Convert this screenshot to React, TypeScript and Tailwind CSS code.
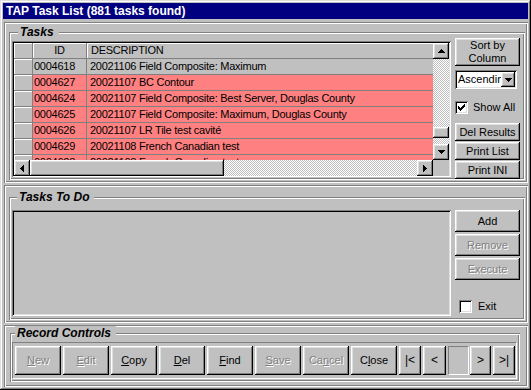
import React from "react";

const RAISED =
  "shadow-[inset_-1px_-1px_#000,inset_1px_1px_#fff,inset_-2px_-2px_#808080,inset_2px_2px_#dfdfdf]";
const SUNKEN =
  "shadow-[inset_1px_1px_#808080,inset_-1px_-1px_#fff,inset_2px_2px_#000,inset_-2px_-2px_#dfdfdf]";
const ETCHED =
  "shadow-[inset_1px_1px_#808080,inset_-1px_-1px_#fff,inset_2px_2px_#fff,inset_-2px_-2px_#808080]";
const CHECKER =
  "bg-[image:repeating-conic-gradient(#fff_0_25%,#c0c0c0_0_50%)] bg-[length:2px_2px]";

function Tri({ dir }: { dir: "up" | "down" | "left" | "right" }) {
  if (dir === "up")
    return (
      <svg width="7" height="4" shapeRendering="crispEdges">
        <path d="M3 0h1v1H3z M2 1h3v1H2z M1 2h5v1H1z M0 3h7v1H0z" fill="#000" />
      </svg>
    );
  if (dir === "down")
    return (
      <svg width="7" height="4" shapeRendering="crispEdges">
        <path d="M0 0h7v1H0z M1 1h5v1H1z M2 2h3v1H2z M3 3h1v1H3z" fill="#000" />
      </svg>
    );
  if (dir === "left")
    return (
      <svg width="4" height="7" shapeRendering="crispEdges">
        <path d="M3 0h1v7H3z M2 1h1v5H2z M1 2h1v3H1z M0 3h1v1H0z" fill="#000" />
      </svg>
    );
  return (
    <svg width="4" height="7" shapeRendering="crispEdges">
      <path d="M0 0h1v7H0z M1 1h1v5H1z M2 2h1v3H2z M3 3h1v1H3z" fill="#000" />
    </svg>
  );
}

function Btn({
  children,
  className = "",
  disabled = false,
}: {
  children: React.ReactNode;
  className?: string;
  disabled?: boolean;
}) {
  return (
    <div
      className={`flex items-center justify-center shrink-0 bg-[#c0c0c0] text-[11px] leading-[13px] ${RAISED} ${
        disabled ? "text-[#808080] [text-shadow:1px_1px_0_#fff]" : "text-black"
      } ${className}`}
    >
      {children}
    </div>
  );
}

function Group({
  label,
  labelLeft,
  className = "",
  children,
}: {
  label: string;
  labelLeft: string;
  className?: string;
  children: React.ReactNode;
}) {
  return (
    <div className={`relative ${ETCHED} ${className}`}>
      <span
        className={`absolute top-[-7px] ${labelLeft} h-[14px] pl-[2px] pr-[5px] bg-[#c0c0c0] font-bold italic text-[12px] leading-[14px] text-black`}
      >
        {label}
      </span>
      {children}
    </div>
  );
}

function CheckBox({ checked }: { checked: boolean }) {
  return (
    <div className={`w-[13px] h-[13px] shrink-0 bg-white flex items-center justify-center ${SUNKEN}`}>
      {checked && (
        <svg width="7" height="7" shapeRendering="crispEdges">
          <path
            d="M6 0h1v3H6z M5 1h1v3H5z M4 2h1v3H4z M3 3h1v3H3z M2 4h1v3H2z M1 3h1v3H1z M0 2h1v3H0z"
            fill="#000"
          />
        </svg>
      )}
    </div>
  );
}

const rows = [
  { id: "0004618", d: "20021106 Field Composite: Maximum", hl: false },
  { id: "0004627", d: "20021107 BC Contour", hl: true },
  { id: "0004624", d: "20021107 Field Composite: Best Server, Douglas County", hl: true },
  { id: "0004625", d: "20021107 Field Composite: Maximum, Douglas County", hl: true },
  { id: "0004626", d: "20021107 LR Tile test cavité", hl: true },
  { id: "0004629", d: "20021108 French Canadian test", hl: true },
  { id: "0004628", d: "20021108 French Canadian test", hl: true },
];

function Grid() {
  return (
    <div className={`w-[439px] h-[136px] mt-[7px] ml-[1px] p-[2px] bg-[#c0c0c0] ${SUNKEN} shrink-0`}>
      <div className="flex flex-col w-full h-full">
        <div className="flex h-[117px]">
          <div className="w-[419px] h-full overflow-hidden flex flex-col bg-[#c0c0c0] text-[11px] tracking-[-0.25px] text-black">
            {/* header */}
            <div className="flex h-[16px] shrink-0">
              <div className="w-[19px] shrink-0 bg-[#c0c0c0] border-r border-b border-[#808080] shadow-[inset_1px_1px_#fff]" />
              <div className="w-[54px] shrink-0 bg-[#c0c0c0] border-r border-b border-[#808080] shadow-[inset_1px_1px_#fff] text-center leading-[15px]">
                ID
              </div>
              <div className="flex-1 bg-[#c0c0c0] border-b border-[#808080] shadow-[inset_1px_1px_#fff] pl-[4px] leading-[15px]">
                DESCRIPTION
              </div>
            </div>
            {rows.map((r) => (
              <div key={r.id + r.d} className="flex h-[16px] shrink-0">
                <div className="w-[19px] shrink-0 bg-[#c0c0c0] border-r border-b border-[#808080] shadow-[inset_1px_1px_#fff]" />
                <div
                  className={`w-[54px] shrink-0 border-r border-b border-[#808080] pl-[1px] leading-[15px] ${
                    r.hl ? "bg-[#ff8080]" : "bg-[#c0c0c0]"
                  }`}
                >
                  {r.id}
                </div>
                <div
                  className={`flex-1 border-b border-[#808080] pl-[3px] leading-[15px] whitespace-nowrap overflow-hidden ${
                    r.hl ? "bg-[#ff8080]" : "bg-[#c0c0c0]"
                  }`}
                >
                  {r.d}
                </div>
              </div>
            ))}
          </div>
          {/* vertical scrollbar */}
          <div className="w-[16px] h-full flex flex-col shrink-0">
            <Btn className="h-[16px] w-[16px]">
              <Tri dir="up" />
            </Btn>
            <div className={`h-[68px] ${CHECKER}`} />
            <Btn className="h-[11px] w-[16px]">{""}</Btn>
            <div className={`flex-1 ${CHECKER}`} />
            <Btn className="h-[16px] w-[16px]">
              <Tri dir="down" />
            </Btn>
          </div>
        </div>
        <div className="flex h-[16px]">
          <div className="w-[419px] flex">
            <Btn className="h-[16px] w-[16px]">
              <Tri dir="left" />
            </Btn>
            <Btn className="h-[16px] w-[194px]">{""}</Btn>
            <div className={`flex-1 ${CHECKER}`} />
            <Btn className="h-[16px] w-[16px]">
              <Tri dir="right" />
            </Btn>
          </div>
          <div className="w-[16px] bg-[#c0c0c0]" />
        </div>
      </div>
    </div>
  );
}

export default function App() {
  return (
    <div
      className={`w-[531px] h-[390px] bg-[#c0c0c0] p-[3px] flex flex-col font-[family-name:'Liberation_Sans',Arial,sans-serif] shadow-[inset_-1px_-1px_#000,inset_1px_1px_#dfdfdf,inset_-2px_-2px_#808080,inset_2px_2px_#fff]`}
    >
      {/* Title bar */}
      <div className="h-[16px] shrink-0 bg-[#000080] text-white font-bold text-[12px] leading-[16px] pl-[3px] whitespace-nowrap">
        TAP Task List (881 tasks found)
      </div>

      {/* Tasks panel */}
      <div className={`mt-[3px] ml-[1px] h-[161px] shrink-0 flex flex-col ${ETCHED}`}>
        <Group label="Tasks" labelLeft="left-[9px]" className="ml-[5px] mt-[10px] mr-[3px] h-[148px]">
          <div className="flex items-start pt-[2px] pl-[2px]">
            <Grid />
            <div className="ml-[4px] w-[65px] flex flex-col shrink-0">
              <Btn className="mt-[4px] h-[28px] w-[65px] flex-col">
                <span>Sort by</span>
                <span>Column</span>
              </Btn>
              <div className={`mt-[4px] w-[62px] h-[19px] bg-white flex items-center p-[2px] ${SUNKEN}`}>
                <span className="flex-1 overflow-hidden whitespace-nowrap text-[11px] leading-[15px] pl-[1px] text-black">
                  Ascending
                </span>
                <Btn className="w-[14px] h-[15px]">
                  <Tri dir="down" />
                </Btn>
              </div>
              <div className="mt-[12px] h-[13px] flex items-center">
                <CheckBox checked />
                <span className="ml-[5px] text-[11px] leading-[13px] text-black">Show All</span>
              </div>
              <Btn className="mt-[9px] h-[18px] w-[65px]">Del Results</Btn>
              <Btn className="mt-[1px] h-[18px] w-[65px]">Print List</Btn>
              <Btn className="mt-[1px] h-[18px] w-[65px]">Print INI</Btn>
            </div>
          </div>
        </Group>
      </div>

      {/* Tasks To Do panel */}
      <div className={`mt-[2px] ml-[1px] h-[138px] shrink-0 flex flex-col ${ETCHED}`}>
        <Group label="Tasks To Do" labelLeft="left-[8px]" className="ml-[5px] mt-[12px] mr-[3px] h-[123px]">
          <div className="flex items-start pt-[2px] pl-[2px]">
            <div className={`mt-[11px] ml-[1px] w-[439px] h-[106px] bg-[#c0c0c0] shrink-0 ${SUNKEN}`} />
            <div className="ml-[4px] mt-[11px] w-[65px] flex flex-col shrink-0">
              <Btn className="h-[22px] w-[65px]">Add</Btn>
              <Btn className="mt-[2px] h-[22px] w-[65px]" disabled>
                Remove
              </Btn>
              <Btn className="mt-[2px] h-[22px] w-[65px]" disabled>
                Execute
              </Btn>
              <div className="mt-[20px] ml-[4px] h-[13px] flex items-center">
                <CheckBox checked={false} />
                <span className="ml-[6px] text-[11px] leading-[13px] text-black">Exit</span>
              </div>
            </div>
          </div>
        </Group>
      </div>

      {/* Record Controls panel */}
      <div className={`mt-[2px] ml-[1px] h-[62px] shrink-0 flex flex-col ${ETCHED}`}>
        <Group label="Record Controls" labelLeft="left-[5px]" className="ml-[6px] mt-[8px] mr-[8px] h-[49px]">
          <div className="pt-[2px] pl-[2px]">
            <div className="mt-[7px] w-[505px] h-[37px] border border-t-[#808080] border-l-[#808080] border-b-white border-r-white pl-[2px] pt-[3px] flex items-start gap-[2px]">
              <Btn className="w-[46px] h-[29px]" disabled>
                <span>
                  <u className="underline-offset-[1px]">N</u>ew
                </span>
              </Btn>
              <Btn className="w-[46px] h-[29px]" disabled>
                <span>
                  <u className="underline-offset-[1px]">E</u>dit
                </span>
              </Btn>
              <Btn className="w-[46px] h-[29px]">
                <span>
                  <u className="underline-offset-[1px]">C</u>opy
                </span>
              </Btn>
              <Btn className="w-[46px] h-[29px]">
                <span>
                  <u className="underline-offset-[1px]">D</u>el
                </span>
              </Btn>
              <Btn className="w-[46px] h-[29px]">
                <span>
                  <u className="underline-offset-[1px]">F</u>ind
                </span>
              </Btn>
              <Btn className="w-[46px] h-[29px]" disabled>
                <span>
                  <u className="underline-offset-[1px]">S</u>ave
                </span>
              </Btn>
              <Btn className="w-[46px] h-[29px]" disabled>
                <span>
                  Ca<u className="underline-offset-[1px]">n</u>cel
                </span>
              </Btn>
              <Btn className="w-[46px] h-[29px]">
                <span>
                  C<u className="underline-offset-[1px]">l</u>ose
                </span>
              </Btn>
              <Btn className="w-[22px] h-[29px] text-[12px]">|&lt;</Btn>
              <Btn className="w-[23px] h-[29px] text-[12px]">&lt;</Btn>
              <div className="w-[21px] h-[29px] shrink-0 bg-[#c0c0c0] border border-t-[#808080] border-l-[#808080] border-b-white border-r-white" />
              <Btn className="w-[21px] h-[29px] text-[12px] -ml-[1px]">&gt;</Btn>
              <Btn className="w-[22px] h-[29px] text-[12px]">&gt;|</Btn>
            </div>
          </div>
        </Group>
      </div>
    </div>
  );
}
